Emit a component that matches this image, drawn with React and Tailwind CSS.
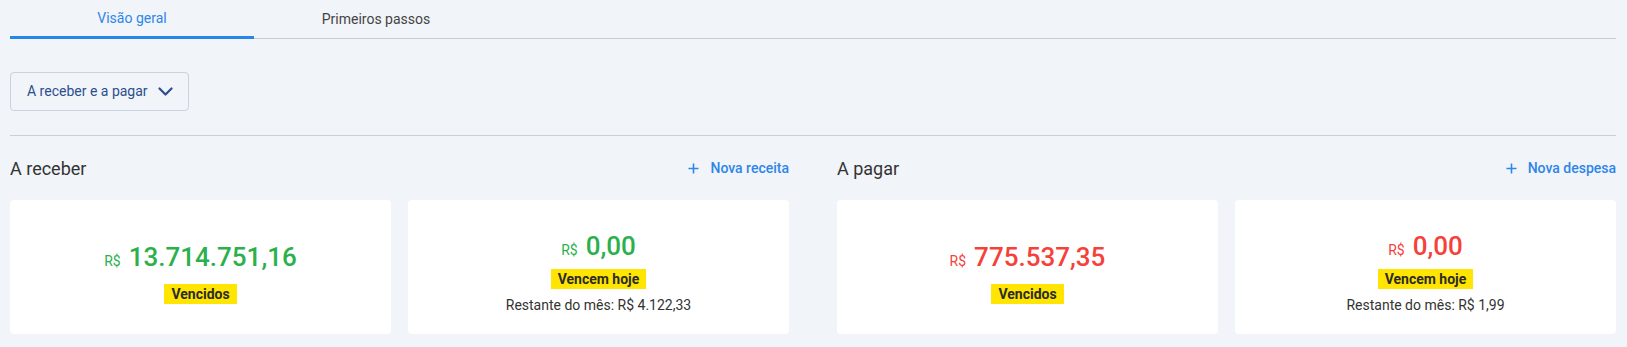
import React from 'react';

const font = { fontFamily: 'Roboto, "Noto Sans", sans-serif' };

function Plus() {
  return (
    <svg width="11" height="11" viewBox="0 0 11 11" className="shrink-0">
      <path d="M5.5 0.5v10M0.5 5.5h10" stroke="currentColor" strokeWidth="1.6" />
    </svg>
  );
}

function Chevron() {
  return (
    <svg width="15" height="9" viewBox="0 0 15 9" className="shrink-0">
      <path d="M1.5 1.5l6 6 6-6" fill="none" stroke="currentColor" strokeWidth="2.2" strokeLinecap="round" strokeLinejoin="round" />
    </svg>
  );
}

function Card({ value, label, rest, color }) {
  return (
    <div className={`flex h-[134px] flex-col items-center justify-center rounded-[4px] bg-white ${rest ? 'pt-[11px]' : 'pt-[12px]'}`}>
      <div className={`flex items-baseline leading-[30px] ${color}`}>
        <span className="mr-[8px] text-[14px]">R$</span>
        <span className="text-[26px] font-medium">{value}</span>
      </div>
      <div className={`bg-[#ffe500] px-[7px] text-[14px] font-bold leading-[20px] text-[#2b2b2b] ${rest ? 'mt-[4px]' : 'mt-[8px]'}`}>
        {label}
      </div>
      {rest && (
        <div className="mt-[7px] text-[14px] leading-[18px] text-[#333]">Restante do mês: R$ {rest}</div>
      )}
    </div>
  );
}

function Section({ title, action, cards, color }) {
  return (
    <div>
      <div className="flex h-[64px] items-center justify-between">
        <h2 className="text-[18px] font-normal text-[#333]">{title}</h2>
        <button className="flex items-center gap-[11px] text-[14px] font-medium text-[#2f86e8]">
          <Plus />
          {action}
        </button>
      </div>
      <div className="grid grid-cols-2 gap-[17px]">
        {cards.map((c, i) => (
          <Card key={i} {...c} color={color} />
        ))}
      </div>
    </div>
  );
}

export default function App() {
  return (
    <div className="min-h-screen bg-[#f1f4f9] pl-[10px] pr-[11px]" style={font}>
      <div className="flex border-b border-[#c8cbd0]">
        <div className="-mb-px flex h-[39px] w-[244px] items-center justify-center border-b-[3px] border-[#2687e9] pt-[1px] text-[14px] text-[#2f86e8]">
          Visão geral
        </div>
        <div className="flex h-[38px] w-[244px] items-center justify-center pt-[1px] text-[14px] text-[#444]">
          Primeiros passos
        </div>
      </div>

      <div className="pt-[33px] pb-[24px]">
        <button className="flex h-[39px] w-[179px] items-center gap-[10px] rounded-[4px] border border-[#c9d2df] pl-[16px] text-[14px] text-[#2c4e8c]">
          A receber e a pagar
          <Chevron />
        </button>
      </div>

      <div className="grid grid-cols-2 gap-[48px] border-t border-[#c8cfda]">
        <Section
          title="A receber"
          action="Nova receita"
          color="text-[#2cb04c]"
          cards={[
            { value: '13.714.751,16', label: 'Vencidos' },
            { value: '0,00', label: 'Vencem hoje', rest: '4.122,33' },
          ]}
        />
        <Section
          title="A pagar"
          action="Nova despesa"
          color="text-[#f5413a]"
          cards={[
            { value: '775.537,35', label: 'Vencidos' },
            { value: '0,00', label: 'Vencem hoje', rest: '1,99' },
          ]}
        />
      </div>
    </div>
  );
}
